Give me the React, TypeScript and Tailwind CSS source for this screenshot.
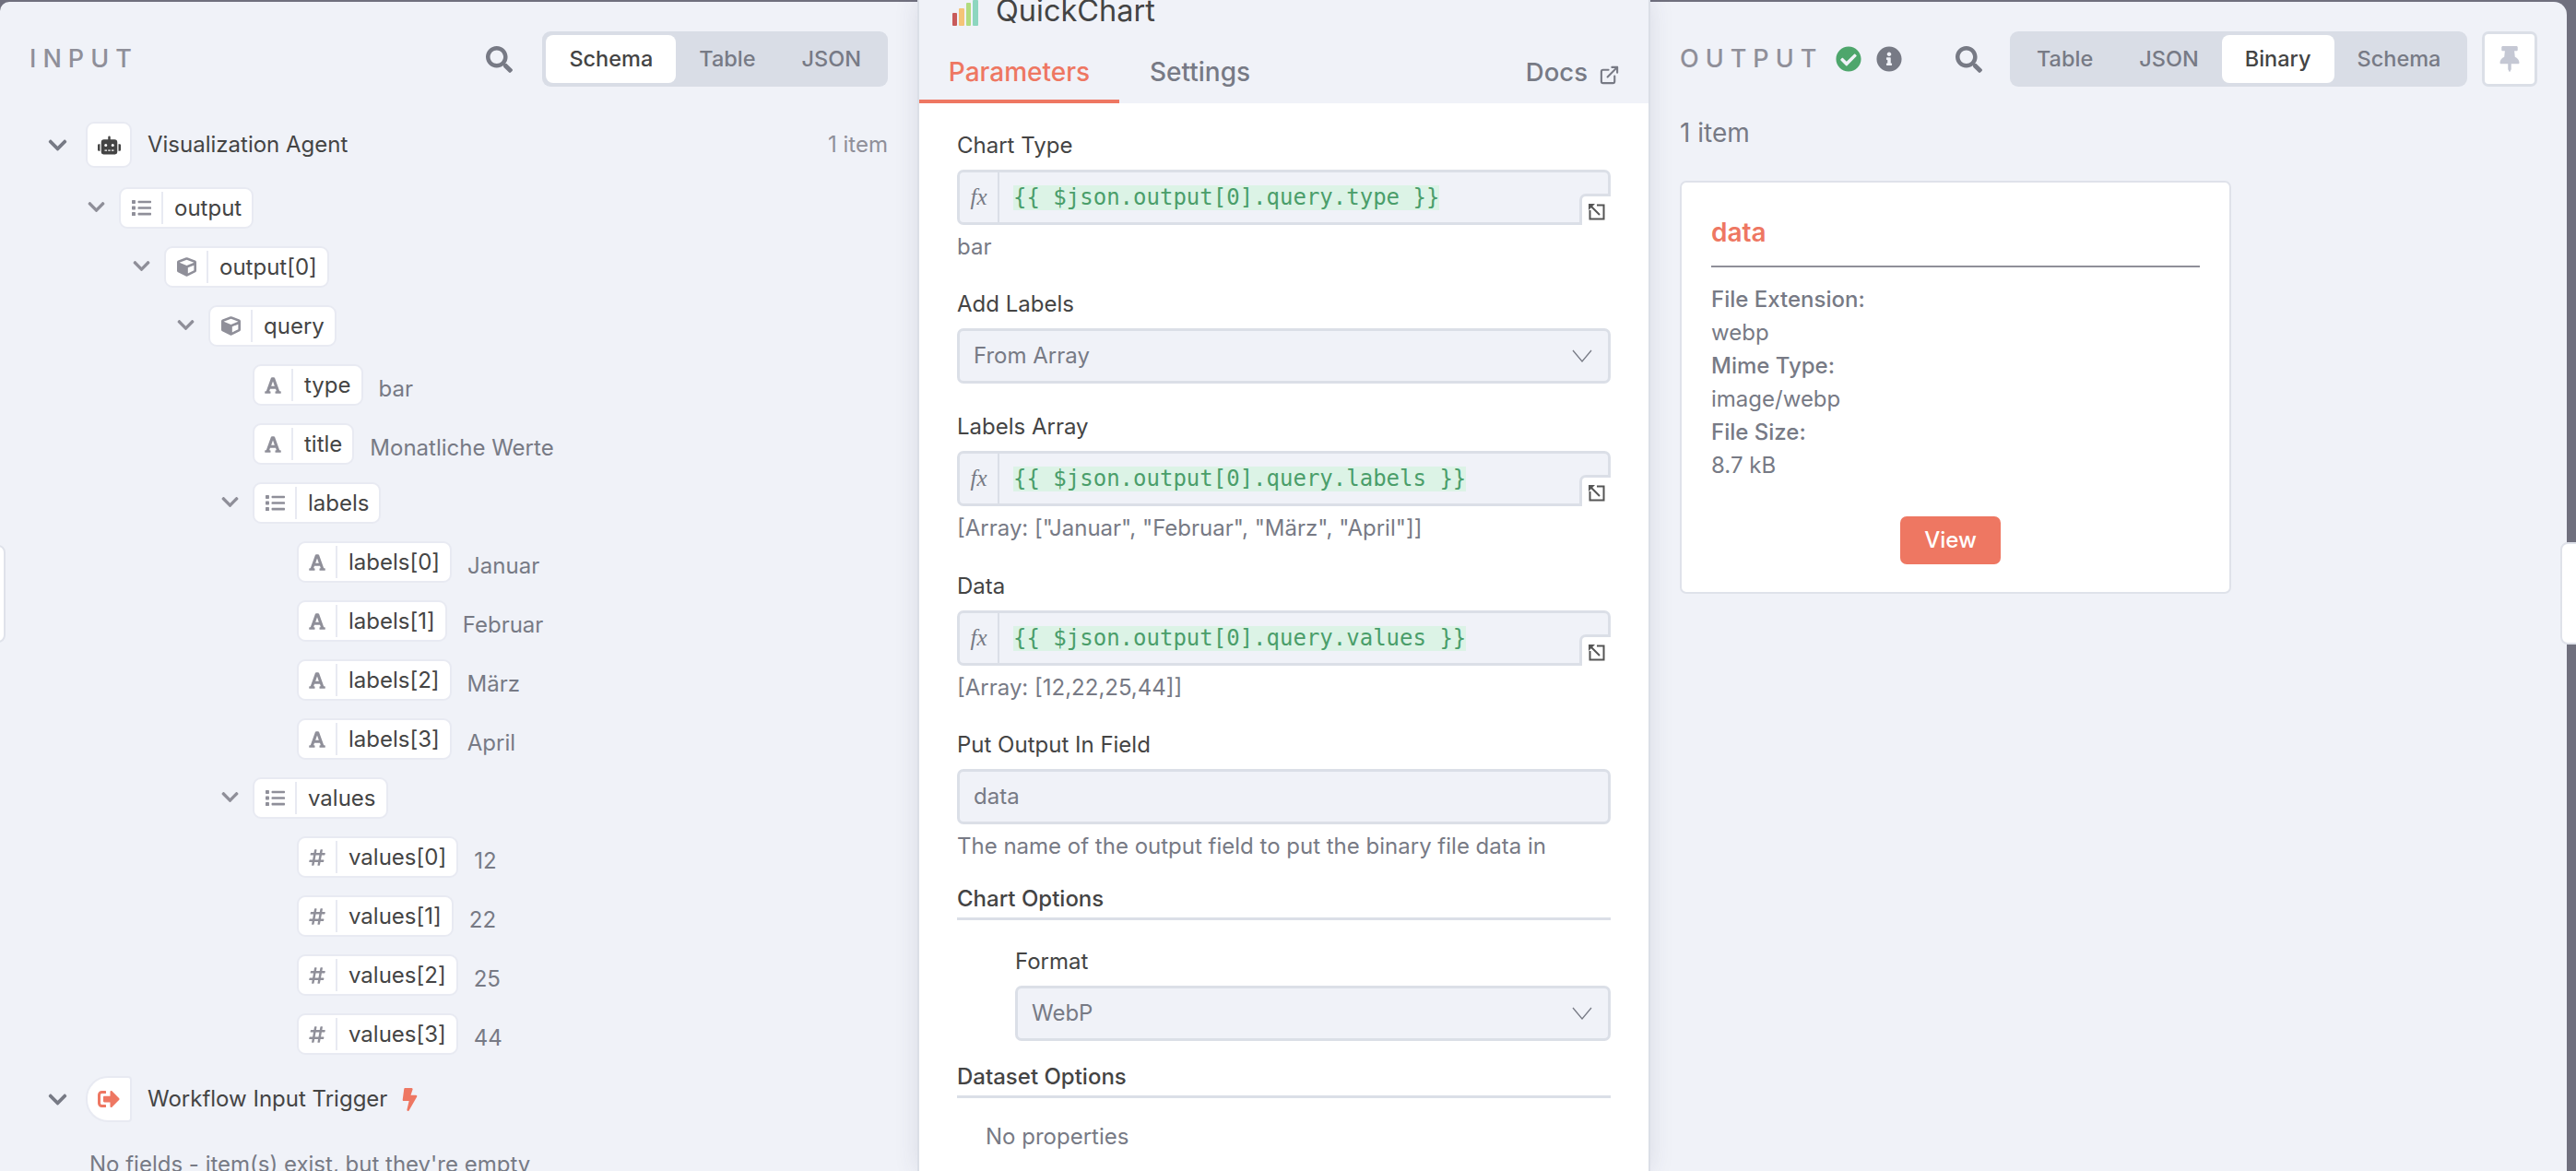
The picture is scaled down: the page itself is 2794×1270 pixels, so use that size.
import { ExternalLink } from "lucide-react";
import {
  FaBolt,
  FaCheckCircle,
  FaChevronDown,
  FaCube,
  FaFont,
  FaHashtag,
  FaInfoCircle,
  FaList,
  FaRobot,
  FaSearch,
  FaSignOutAlt,
  FaThumbtack,
} from "react-icons/fa";

type Kind = "list" | "cube" | "text" | "num";

const fields: { name: string; kind: Kind; indent: string; open?: boolean; value?: string }[] = [
  { name: "output", kind: "list", indent: "pl-[94px]", open: true },
  { name: "output[0]", kind: "cube", indent: "pl-[143px]", open: true },
  { name: "query", kind: "cube", indent: "pl-[191px]", open: true },
  { name: "type", kind: "text", indent: "pl-[274px]", value: "bar" },
  { name: "title", kind: "text", indent: "pl-[274px]", value: "Monatliche Werte" },
  { name: "labels", kind: "list", indent: "pl-[239px]", open: true },
  { name: "labels[0]", kind: "text", indent: "pl-[322px]", value: "Januar" },
  { name: "labels[1]", kind: "text", indent: "pl-[322px]", value: "Februar" },
  { name: "labels[2]", kind: "text", indent: "pl-[322px]", value: "März" },
  { name: "labels[3]", kind: "text", indent: "pl-[322px]", value: "April" },
  { name: "values", kind: "list", indent: "pl-[239px]", open: true },
  { name: "values[0]", kind: "num", indent: "pl-[322px]", value: "12" },
  { name: "values[1]", kind: "num", indent: "pl-[322px]", value: "22" },
  { name: "values[2]", kind: "num", indent: "pl-[322px]", value: "25" },
  { name: "values[3]", kind: "num", indent: "pl-[322px]", value: "44" },
];

const fileInfo = [
  { text: "File Extension:", key: true },
  { text: "webp" },
  { text: "Mime Type:", key: true },
  { text: "image/webp" },
  { text: "File Size:", key: true },
  { text: "8.7 kB" },
];

function KindIcon({ kind }: { kind: Kind }) {
  if (kind === "list") return <FaList className="text-[21px] text-[#8f8f99]" />;
  if (kind === "cube") return <FaCube className="text-[21px] text-[#8f8f99]" />;
  if (kind === "text") return <FaFont className="text-[20px] text-[#8f8f99]" />;
  return <FaHashtag className="text-[20px] text-[#8f8f99]" />;
}

function FieldRow({ name, kind, indent, open, value }: (typeof fields)[number]) {
  // leaf chips have a slightly narrower icon cell than the object/array ones
  const leaf = kind === "text" || kind === "num";
  return (
    <div className={`flex h-[45px] items-start ${indent}`}>
      {open && <FaChevronDown className="mr-[14px] mt-[11px] h-[21px] w-[21px] text-[#8f8f99]" />}
      <div className="flex h-[45px] items-center rounded-[9px] border-2 border-[#e8eaf2] bg-white">
        <div className={`flex h-[35px] items-center justify-center border-r-2 border-[#e8eaf2] ${leaf ? "w-[42px]" : "w-[46px]"}`}>
          <KindIcon kind={kind} />
        </div>
        <span className="pl-[12px] pr-[11px] text-[24px] leading-[32px] text-[#444]">{name}</span>
      </div>
      {value && <span className="ml-[17px] mt-[11px] text-[24px] leading-[32px] text-[#777a85]">{value}</span>}
    </div>
  );
}

function Segmented({ items, active }: { items: string[]; active: string }) {
  return (
    <div className="flex h-[60px] items-center rounded-[9px] bg-[#d9dde6] px-[4px]">
      {items.map((item) => (
        <div
          key={item}
          className={`flex h-[52px] items-center rounded-[8px] px-[25px] text-[23.5px] font-medium ${
            item === active ? "bg-white text-[#444]" : "text-[#777a85]"
          }`}
        >
          {item}
        </div>
      ))}
    </div>
  );
}

function Label({ children }: { children: string }) {
  return <div className="h-[32px] text-[24px] leading-[32px] text-[#444]">{children}</div>;
}

function Expand() {
  return (
    <svg viewBox="0 0 18 18" className="h-[18px] w-[18px]" fill="none" stroke="#555" strokeWidth="2">
      <path d="M9 1.5h7.5v15h-15V7" />
      <path d="M3 3l9 9" />
      <path d="M0 0h7L0 7z" fill="#555" stroke="none" />
    </svg>
  );
}

function ExprInput({ code }: { code: string }) {
  return (
    <div className="relative mt-[10px] flex h-[60px] items-stretch rounded-[7px] border-[3px] border-[#dbdfe7] bg-[#f0f2f8]">
      <div className="flex w-[43px] items-center justify-center border-r-2 border-[#dbdfe7] font-['Liberation_Serif'] text-[25px] italic text-[#777a85]">
        fx
      </div>
      <div className="flex items-center pl-[15px]">
        <span className="h-[27px] bg-[#dcf3e6] font-['DejaVu_Sans_Mono'] text-[24px] leading-[27px] text-[#4a9e6a]">{code}</span>
      </div>
      <div className="absolute -bottom-[3px] -right-[3px] flex h-[34px] w-[34px] items-center justify-center rounded-tl-[7px] border-[3px] border-b-0 border-r-0 border-[#dbdfe7] bg-white pl-[1px] pt-[3px]">
        <Expand />
      </div>
    </div>
  );
}

function Select({ text }: { text: string }) {
  return (
    <div className="mt-[10px] flex h-[60px] items-center justify-between rounded-[7px] border-[3px] border-[#dbdfe7] bg-[#f0f2f8] pl-[15px] pr-[17px]">
      <span className="text-[24px] text-[#777a85]">{text}</span>
      <svg viewBox="0 0 22 14" className="h-[14px] w-[22px]" fill="none" stroke="#777a85" strokeWidth="1.3">
        <path d="M1 1l10 12L21 1" />
      </svg>
    </div>
  );
}

function TextInput({ text }: { text: string }) {
  return (
    <div className="mt-[10px] flex h-[60px] items-center rounded-[7px] border-[3px] border-[#dbdfe7] bg-[#f0f2f8] pl-[15px]">
      <span className="text-[24px] text-[#777a85]">{text}</span>
    </div>
  );
}

function Hint({ children }: { children: string }) {
  return <div className="mt-[8px] h-[32px] text-[24px] leading-[32px] text-[#777a85]">{children}</div>;
}

function SectionTitle({ children }: { children: string }) {
  return (
    <div className="border-b-[3px] border-[#dbdfe7] pb-[4px] text-[24px] font-medium leading-[32px] text-[#444]">
      {children}
    </div>
  );
}

function InputPanel() {
  return (
    <div className="flex h-full w-[997px] shrink-0 flex-col overflow-hidden rounded-tl-[10px] bg-[#f0f2f8]">
      <div className="mt-[32px] flex h-[60px] shrink-0 items-center pl-[32px] pr-[34px]">
        <span className="text-[27px] font-medium tracking-[0.26em] text-[#8f8f99]">INPUT</span>
        <FaSearch className="ml-auto mr-[32px] text-[29px] text-[#777a85]" />
        <Segmented items={["Schema", "Table", "JSON"]} active="Schema" />
      </div>

      <div className="mt-[38px] flex h-[50px] shrink-0 items-center pl-[51px] pr-[34px]">
        <FaChevronDown className="h-[23px] w-[23px] text-[#777a85]" />
        <div className="ml-[19px] flex h-[50px] w-[50px] items-center justify-center rounded-[9px] border-2 border-[#e8eaf2] bg-white">
          <FaRobot className="text-[25px] text-[#444]" />
        </div>
        <span className="ml-[17px] text-[24px] text-[#444]">Visualization Agent</span>
        <span className="ml-auto text-[24px] text-[#8f8f99]">1 item</span>
      </div>

      <div className="mt-[21px] flex flex-col gap-[19px]">
        {fields.map((f) => (
          <FieldRow key={f.name} {...f} />
        ))}
      </div>

      <div className="mt-[23px] flex h-[50px] shrink-0 items-center pl-[51px]">
        <FaChevronDown className="h-[23px] w-[23px] text-[#777a85]" />
        <div className="ml-[19px] flex h-[50px] w-[50px] items-center justify-center rounded-l-[24px] rounded-r-[4px] border-2 border-[#e8eaf2] bg-white">
          <FaSignOutAlt className="text-[24px] text-[#ee7762]" />
        </div>
        <span className="ml-[17px] text-[24px] text-[#444]">Workflow Input Trigger</span>
        <FaBolt className="ml-[12px] text-[25px] text-[#ee7762]" />
      </div>

      <div className="mt-[30px] pl-[97px] text-[24px] leading-[32px] text-[#777a85]">No fields - item(s) exist, but they're empty</div>
    </div>
  );
}

function ParamsPanel() {
  return (
    <div className="relative z-10 -mt-[2px] flex h-[1270px] w-[791px] shrink-0 flex-col overflow-hidden bg-white shadow-[0_0_0_2px_#dbdfe7,0_0_26px_rgba(60,60,90,0.14)]">
      <div className="h-[112px] shrink-0 bg-[#f0f2f8]">
        <div className="flex h-[32px] items-start pl-[36px]">
          <div className="flex h-[28px] items-end gap-[2px]">
            <div className="h-[14px] w-[5px] rounded-[1px] bg-[#c85a5a]" />
            <div className="h-[19px] w-[6px] rounded-[1px] bg-[#f5c477]" />
            <div className="h-[25px] w-[5px] rounded-[1px] bg-[#b2dc7f]" />
            <div className="h-[28px] w-[6px] rounded-[1px] bg-[#8dd6bf]" />
          </div>
          <span className="ml-[19px] -mt-[8px] text-[32.5px] leading-[40px] text-[#444]">QuickChart</span>
        </div>
        <div className="mt-[30px] flex h-[50px] items-start text-[28px] font-medium leading-[32px]">
          <div className="flex h-[50px] w-[217px] justify-center border-b-[4px] border-[#ee7762] text-[#ee7762]">Parameters</div>
          <div className="ml-[33px] text-[#777a85]">Settings</div>
          <div className="ml-auto mr-[31px] flex gap-[12px] text-[27.5px] text-[#777a85]">
            Docs
            <ExternalLink className="mt-[8px] h-[23px] w-[23px]" strokeWidth={2.2} />
          </div>
        </div>
      </div>

      <div className="flex flex-col px-[41px] pt-[30px]">
        <Label>Chart Type</Label>
        <ExprInput code="{{ $json.output[0].query.type }}" />
        <Hint>bar</Hint>

        <div className="mt-[30px]">
          <Label>Add Labels</Label>
          <Select text="From Array" />
        </div>

        <div className="mt-[31px]">
          <Label>Labels Array</Label>
          <ExprInput code="{{ $json.output[0].query.labels }}" />
          <Hint>[Array: ["Januar", "Februar", "März", "April"]]</Hint>
        </div>

        <div className="mt-[31px]">
          <Label>Data</Label>
          <ExprInput code="{{ $json.output[0].query.values }}" />
          <Hint>[Array: [12,22,25,44]]</Hint>
        </div>

        <div className="mt-[30px]">
          <Label>Put Output In Field</Label>
          <TextInput text="data" />
          <Hint>The name of the output field to put the binary file data in</Hint>
        </div>

        <div className="mt-[25px]">
          <SectionTitle>Chart Options</SectionTitle>
        </div>
        <div className="mt-[29px] pl-[63px]">
          <Label>Format</Label>
          <Select text="WebP" />
        </div>

        <div className="mt-[23px]">
          <SectionTitle>Dataset Options</SectionTitle>
        </div>
        <div className="mt-[26px] pl-[31px] text-[24px] leading-[32px] text-[#777a85]">No properties</div>
      </div>
    </div>
  );
}

function OutputPanel() {
  return (
    <div className="flex h-full flex-1 flex-col overflow-hidden rounded-tr-[14px] bg-[#f0f2f8] pl-[34px]">
      <div className="mt-[32px] flex h-[60px] shrink-0 items-center">
        <span className="w-[169px] text-[27px] font-medium tracking-[0.26em] text-[#8f8f99]">OUTPUT</span>
        <FaCheckCircle className="text-[28px] text-[#4ea66c]" />
        <FaInfoCircle className="ml-[16px] text-[28px] text-[#777a85]" />
        <FaSearch className="ml-[58px] text-[29px] text-[#777a85]" />
        <div className="ml-[30px]">
          <Segmented items={["Table", "JSON", "Binary", "Schema"]} active="Binary" />
        </div>
        <div className="ml-[16px] flex h-[60px] w-[60px] items-center justify-center rounded-[7px] border-[3px] border-[#dbdfe7] bg-white">
          <FaThumbtack className="text-[28px] text-[#c5c8d4]" />
        </div>
      </div>

      <div className="mt-[34px] h-[32px] text-[28px] leading-[32px] text-[#777a85]">1 item</div>

      <div className="mt-[36px] h-[448px] w-[598px] rounded-[7px] border-2 border-[#dfe2ea] bg-white px-[32px] pt-[38px]">
        <div className="text-[28px] font-semibold leading-[32px] text-[#ee7762]">data</div>
        <div className="mt-[20px] h-[2px] bg-[#8f8f99]" />
        <div className="mt-[17px] flex flex-col">
          {fileInfo.map((row) => (
            <div
              key={row.text}
              className={`h-[36px] text-[24px] leading-[36px] text-[#777a85] ${row.key ? "font-medium" : ""}`}
            >
              {row.text}
            </div>
          ))}
        </div>
        <div className="ml-[205px] mt-[37px] flex h-[52px] w-[109px] items-center justify-center rounded-[7px] bg-[#ee7762] text-[24px] font-medium text-white">
          View
        </div>
      </div>
    </div>
  );
}

export default function App() {
  return (
    <div className="relative flex h-[1270px] w-[2794px] overflow-hidden bg-[#70707e] pr-[10px] pt-[2px] font-['Inter',sans-serif]">
      <InputPanel />
      <ParamsPanel />
      <OutputPanel />
      {/* collapsed side handles */}
      <div className="absolute left-[-10px] top-[591px] h-[106px] w-[16px] rounded-r-[8px] border-2 border-[#dfe2ea] bg-white" />
      <div className="absolute right-[-10px] top-[588px] h-[111px] w-[27px] rounded-l-[8px] border-2 border-[#dfe2ea] bg-white" />
    </div>
  );
}
